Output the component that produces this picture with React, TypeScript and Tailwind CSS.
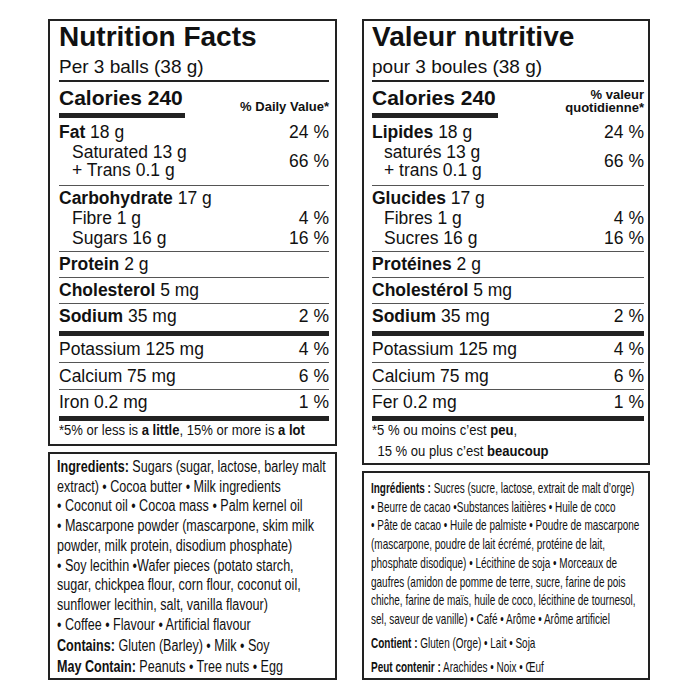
import React from "react";

type RowProps = {
  label: string;
  rest?: string;
  dv?: string;
  className?: string;
};

function Row({ label, rest, dv, className = "" }: RowProps) {
  return (
    <div className={`flex justify-between ${className}`}>
      <span>
        <b>{label}</b>
        {rest}
      </span>
      {dv && <span>{dv}</span>}
    </div>
  );
}

function Plain({ text, dv, className = "" }: { text: string; dv: string; className?: string }) {
  return (
    <div className={`flex justify-between ${className}`}>
      <span>{text}</span>
      <span>{dv}</span>
    </div>
  );
}

const thin = "border-b border-[#555]";

export default function App() {
  return (
    <div className="w-[700px] h-[700px] overflow-hidden bg-white text-[#111] font-['Liberation_Sans',Arial,sans-serif]">
      <div className="flex gap-[25px] pl-[48px] pt-[19px]">
        {/* English */}
        <div className="flex h-[661px] w-[289px] flex-col gap-[6px]">
          <div className="border-2 border-[#222] pl-[9px] pr-[6px] pt-[2px] pb-[6px] text-[17.5px] leading-[20px]">
            <h1 className="text-[28px] leading-[28px] font-bold">Nutrition Facts</h1>
            <p className="mt-[5px] text-[19px] leading-[22px]">Per 3 balls (38 g)</p>
            <div className="mt-[2px] h-[2px] bg-[#222]" />
            <div className="flex items-end justify-between pt-[4px]">
              <div>
                <div className="text-[21px] leading-[24px] font-bold">Calories 240</div>
                <div className="mt-[3px] h-[5px] w-[126px] bg-[#222]" />
              </div>
              <div className="mb-[4px] text-[13px] leading-[15px] font-bold">% Daily Value*</div>
            </div>
            <div className={`pt-[4px] pb-[6px] ${thin}`}>
              <Row label="Fat" rest=" 18 g" dv="24 %" />
              <div className="flex items-center justify-between pl-[13px] pt-[1px]">
                <div className="leading-[18px]">
                  Saturated 13 g
                  <br />+ Trans 0.1 g
                </div>
                <span>66 %</span>
              </div>
            </div>
            <div className={`pt-[2px] pb-[3px] ${thin}`}>
              <Row label="Carbohydrate" rest=" 17 g" />
              <Plain text="Fibre 1 g" dv="4 %" className="pl-[13px]" />
              <Plain text="Sugars 16 g" dv="16 %" className="pl-[13px]" />
            </div>
            <Row label="Protein" rest=" 2 g" className={`pt-[2px] pb-[3px] ${thin}`} />
            <Row label="Cholesterol" rest=" 5 mg" className={`pt-[2px] pb-[3px] ${thin}`} />
            <Row label="Sodium" rest=" 35 mg" dv="2 %" className="pt-[2px] pb-[5px]" />
            <div className="h-[5px] bg-[#222]" />
            <Plain text="Potassium 125 mg" dv="4 %" className={`pt-[3px] pb-[3px] ${thin}`} />
            <Plain text="Calcium 75 mg" dv="6 %" className={`pt-[3px] pb-[3px] ${thin}`} />
            <Plain text="Iron 0.2 mg" dv="1 %" className="pt-[2px] pb-[4px]" />
            <div className="h-[5px] bg-[#222]" />
            <p className="origin-top-left scale-x-[0.9] whitespace-nowrap pt-[1px] text-[14.5px] leading-[16px]">
              *5% or less is <b>a little</b>, 15% or more is <b>a lot</b>
            </p>
          </div>

          <div className="flex-1 border-2 border-[#222] pl-[7px] pt-[3px] text-[16px] leading-[19.7px]">
            <div className="origin-top-left scale-x-[0.785] whitespace-nowrap">
              <div><b>Ingredients:</b> Sugars (sugar, lactose, barley malt</div>
              <div>extract) • Cocoa butter • Milk ingredients</div>
              <div>• Coconut oil • Cocoa mass • Palm kernel oil</div>
              <div>• Mascarpone powder (mascarpone, skim milk</div>
              <div>powder, milk protein, disodium phosphate)</div>
              <div>• Soy lecithin •Wafer pieces (potato starch,</div>
              <div>sugar, chickpea flour, corn flour, coconut oil,</div>
              <div>sunflower lecithin, salt, vanilla flavour)</div>
              <div>• Coffee • Flavour • Artificial flavour</div>
              <div className="mt-[2px]"><b>Contains:</b> Gluten (Barley) • Milk • Soy</div>
              <div className="mt-[1px]"><b>May Contain:</b> Peanuts • Tree nuts • Egg</div>
            </div>
          </div>
        </div>

        {/* French */}
        <div className="flex h-[661px] w-[288px] flex-col gap-[6px]">
          <div className="border-2 border-[#222] pl-[8px] pr-[4px] pt-[2px] pb-[2px] text-[17.5px] leading-[20px]">
            <h1 className="text-[28px] leading-[28px] font-bold">Valeur nutritive</h1>
            <p className="mt-[5px] text-[19px] leading-[22px]">pour 3 boules (38 g)</p>
            <div className="mt-[2px] h-[2px] bg-[#222]" />
            <div className="flex items-end justify-between pt-[4px]">
              <div>
                <div className="text-[21px] leading-[24px] font-bold">Calories 240</div>
                <div className="mt-[3px] h-[5px] w-[126px] bg-[#222]" />
              </div>
              <div className="mb-[4px] text-right text-[13px] leading-[13px] font-bold">
                % valeur
                <br />
                quotidienne*
              </div>
            </div>
            <div className={`pt-[4px] pb-[6px] ${thin}`}>
              <Row label="Lipides" rest=" 18 g" dv="24 %" />
              <div className="flex items-center justify-between pl-[12px] pt-[1px]">
                <div className="leading-[18px]">
                  saturés 13 g
                  <br />+ trans 0.1 g
                </div>
                <span>66 %</span>
              </div>
            </div>
            <div className={`pt-[2px] pb-[3px] ${thin}`}>
              <Row label="Glucides" rest=" 17 g" />
              <Plain text="Fibres 1 g" dv="4 %" className="pl-[12px]" />
              <Plain text="Sucres 16 g" dv="16 %" className="pl-[12px]" />
            </div>
            <Row label="Protéines" rest=" 2 g" className={`pt-[2px] pb-[3px] ${thin}`} />
            <Row label="Cholestérol" rest=" 5 mg" className={`pt-[2px] pb-[3px] ${thin}`} />
            <Row label="Sodium" rest=" 35 mg" dv="2 %" className="pt-[2px] pb-[5px]" />
            <div className="h-[5px] bg-[#222]" />
            <Plain text="Potassium 125 mg" dv="4 %" className={`pt-[3px] pb-[3px] ${thin}`} />
            <Plain text="Calcium 75 mg" dv="6 %" className={`pt-[3px] pb-[3px] ${thin}`} />
            <Plain text="Fer 0.2 mg" dv="1 %" className="pt-[2px] pb-[4px]" />
            <div className="h-[5px] bg-[#222]" />
            <div className="origin-top-left scale-x-[0.9] whitespace-nowrap text-[14.5px] leading-[19px]">
              <div>
                *5 % ou moins c’est <b>peu</b>,
              </div>
              <div className="pl-[6px] pt-[2px]">
                15 % ou plus c’est <b>beaucoup</b>
              </div>
            </div>
          </div>

          <div className="flex-1 border-2 border-[#222] pl-[7px] pt-[6px] text-[15px] leading-[18.7px]">
            <div className="origin-top-left scale-x-[0.665] whitespace-nowrap">
              <div><b>Ingrédients :</b> Sucres (sucre, lactose, extrait de malt d’orge)</div>
              <div>• Beurre de cacao •Substances laitières • Huile de coco</div>
              <div>• Pâte de cacao • Huile de palmiste • Poudre de mascarpone</div>
              <div>(mascarpone, poudre de lait écrémé, protéine de lait,</div>
              <div>phosphate disodique) • Lécithine de soja • Morceaux de</div>
              <div>gaufres (amidon de pomme de terre, sucre, farine de pois</div>
              <div>chiche, farine de maïs, huile de coco, lécithine de tournesol,</div>
              <div>sel, saveur de vanille) • Café • Arôme • Arôme artificiel</div>
              <div className="mt-[5px]"><b>Contient :</b> Gluten (Orge) • Lait • Soja</div>
              <div className="mt-[6px]"><b>Peut contenir :</b> Arachides • Noix • Œuf</div>
            </div>
          </div>
        </div>
      </div>
    </div>
  );
}
